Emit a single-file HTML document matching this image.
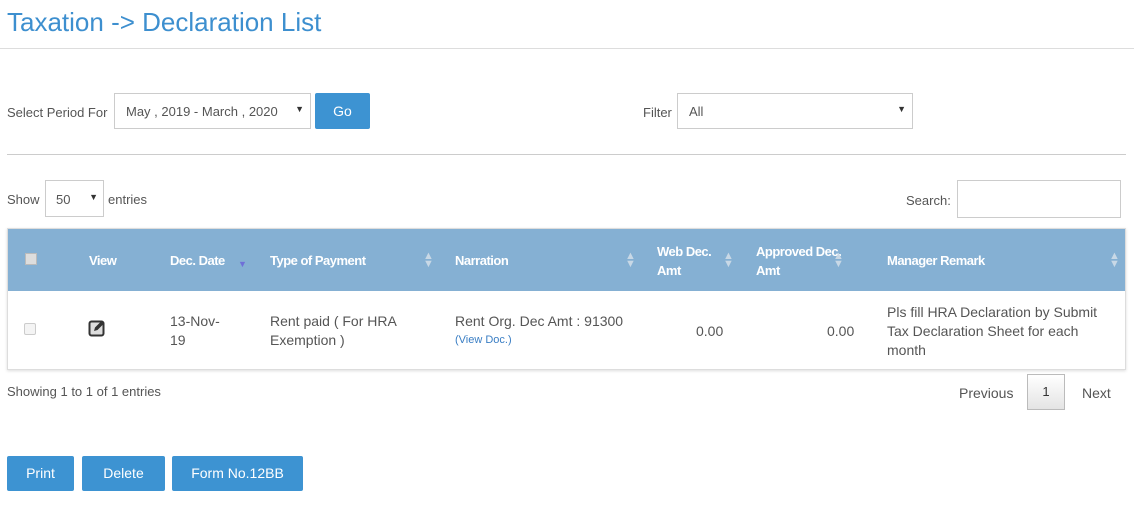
<!DOCTYPE html>
<html><head><style>
body{margin:0;width:1142px;height:509px;background:#fff;font-family:"Liberation Sans",sans-serif;font-size:13px;color:#555;position:relative;overflow:hidden}
.a{position:absolute;white-space:nowrap}
.btn{position:absolute;background:#3d93d2;color:#fff;font-size:14px;text-align:center;border-radius:2px}
.sel{position:absolute;border:1px solid #ccc;background:#fff;color:#555;box-sizing:border-box}
.h{position:absolute;color:#fff;font-weight:bold;font-size:13px;letter-spacing:-0.5px}
.s{position:absolute;color:#c8d8e6;font-size:11px;line-height:8px}
</style></head><body>
<div class="a" style="left:7px;top:7px;font-size:26px;color:#3d8fcf">Taxation -&gt; Declaration List</div>
<div class="a" style="left:0;top:48px;width:1134px;border-top:1px solid #ddd"></div>
<div class="a" style="left:7px;top:105px">Select Period For</div>
<div class="sel" style="left:114px;top:93px;width:197px;height:36px;padding:10px 11px">May , 2019 - March , 2020<span style="position:absolute;right:6px;top:10px;font-size:9px;color:#333">▼</span></div>
<div class="btn" style="left:315px;top:93px;width:55px;height:36px;line-height:36px">Go</div>
<div class="a" style="left:643px;top:105px">Filter</div>
<div class="sel" style="left:677px;top:93px;width:236px;height:36px;padding:10px 11px">All<span style="position:absolute;right:6px;top:10px;font-size:9px;color:#333">▼</span></div>
<div class="a" style="left:7px;top:154px;width:1119px;border-top:1px solid #ccc"></div>
<div class="a" style="left:7px;top:192px">Show</div>
<div class="sel" style="left:45px;top:180px;width:59px;height:37px;padding:11px 10px">50<span style="position:absolute;right:5px;top:11px;font-size:9px;color:#333">▼</span></div>
<div class="a" style="left:108px;top:192px">entries</div>
<div class="a" style="left:906px;top:193px">Search:</div>
<div class="sel" style="left:957px;top:180px;width:164px;height:38px"></div>
<div class="a" style="left:7px;top:228px;width:1119px;height:142px;border:1px solid #ddd;box-sizing:border-box;box-shadow:0 1px 3px #ddd"></div>
<div class="a" style="left:8px;top:229px;width:1117px;height:62px;background:#85b0d3"></div>
<div class="a" style="left:25px;top:253px;width:10px;height:10px;background:#ddd;border:1px solid #bbb"></div>
<div class="h" style="left:89px;top:253px">View</div>
<div class="h" style="left:170px;top:253px">Dec. Date</div><div class="a" style="left:238px;top:259px;font-size:9px;color:#6f6fd8">▼</div>
<div class="h" style="left:270px;top:253px">Type of Payment</div><div class="s" style="left:423px;top:252px">▲<br>▼</div>
<div class="h" style="left:455px;top:253px">Narration</div><div class="s" style="left:625px;top:252px">▲<br>▼</div>
<div class="h" style="left:657px;top:242px;line-height:19px">Web Dec.<br>Amt</div><div class="s" style="left:723px;top:252px">▲<br>▼</div>
<div class="h" style="left:756px;top:242px;line-height:19px">Approved Dec.<br>Amt</div><div class="s" style="left:833px;top:252px">▲<br>▼</div>
<div class="h" style="left:887px;top:253px">Manager Remark</div><div class="s" style="left:1109px;top:252px">▲<br>▼</div>
<div class="a" style="left:24px;top:323px;width:10px;height:10px;border:1px solid #ccc;border-radius:2px;background:#f4f4f4"></div>
<svg class="a" style="left:88px;top:318px" width="19" height="19" viewBox="0 0 19 19"><rect x="1.5" y="3.5" width="14" height="14" rx="2" fill="#ddd" stroke="#333" stroke-width="2"/><path d="M6 13 L7 9.5 L14 2.5 L16.5 5 L9.5 12 Z" fill="#333"/></svg>
<div class="a" style="left:170px;top:312px;line-height:19px;font-size:14px">13-Nov-<br>19</div>
<div class="a" style="left:270px;top:312px;line-height:19px;font-size:14px">Rent paid ( For HRA<br>Exemption )</div>
<div class="a" style="left:455px;top:313px;font-size:14px">Rent Org. Dec Amt : 91300</div>
<div class="a" style="left:455px;top:334px;font-size:11px;color:#3a7ec4">(View Doc.)</div>
<div class="a" style="left:696px;top:323px;font-size:14px">0.00</div>
<div class="a" style="left:827px;top:323px;font-size:14px">0.00</div>
<div class="a" style="left:887px;top:303px;line-height:19px;font-size:14px">Pls fill HRA Declaration by Submit<br>Tax Declaration Sheet for each<br>month</div>
<div class="a" style="left:7px;top:384px">Showing 1 to 1 of 1 entries</div>
<div class="a" style="left:959px;top:385px;font-size:14px">Previous</div>
<div class="a" style="left:1027px;top:374px;width:38px;height:36px;border:1px solid #bbb;box-sizing:border-box;background:linear-gradient(#fff,#e4e4e4);text-align:center;line-height:34px;color:#333">1</div>
<div class="a" style="left:1082px;top:385px;font-size:14px">Next</div>
<div class="btn" style="left:7px;top:456px;width:67px;height:35px;line-height:35px">Print</div>
<div class="btn" style="left:82px;top:456px;width:83px;height:35px;line-height:35px">Delete</div>
<div class="btn" style="left:172px;top:456px;width:131px;height:35px;line-height:35px">Form No.12BB</div>
</body></html>
